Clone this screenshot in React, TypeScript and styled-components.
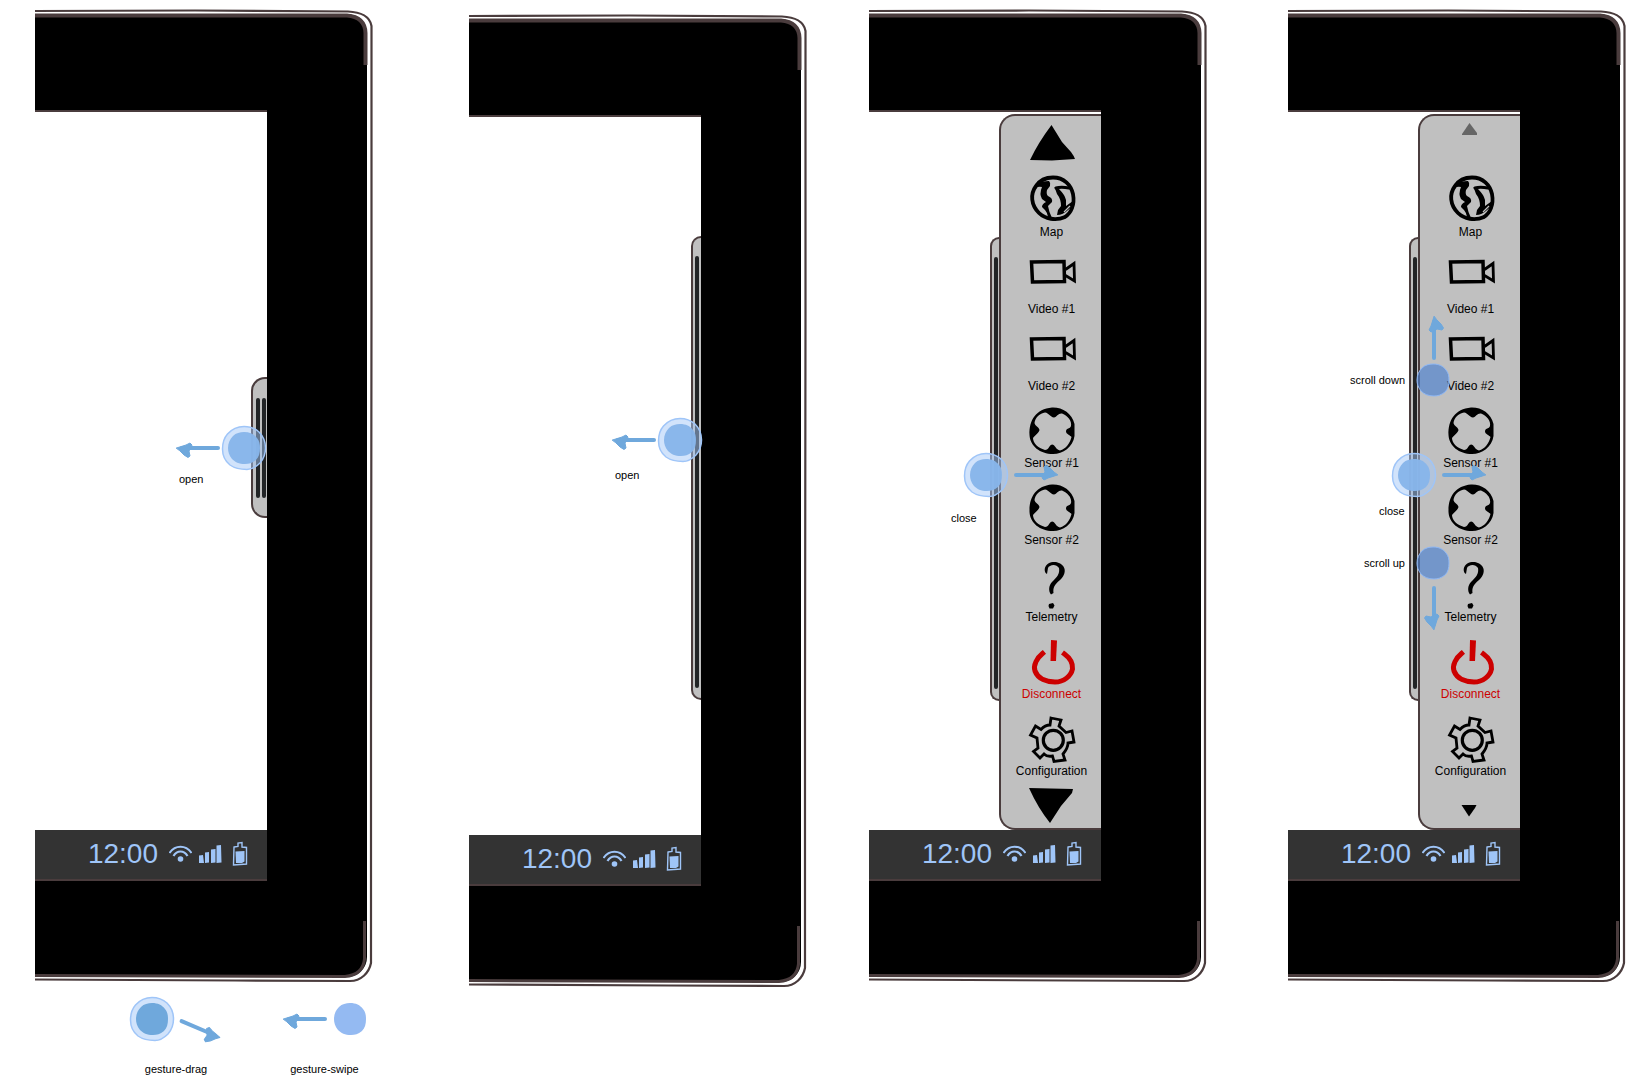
import React from "react";
import styled, { createGlobalStyle } from "styled-components";

const ink = "#4a3c3d";
const panelGrey = "#c0c0c0";
const sky = "#9fc5f8";
const arrowBlue = "#6fa8dc";

const GlobalStyle = createGlobalStyle`
  *, *::before, *::after { box-sizing: border-box; }
  body {
    margin: 0;
    background: #fff;
    color: #000;
    font-family: "Liberation Sans", Arial, sans-serif;
  }
`;

const Page = styled.main`
  padding: 9px 0 0 35px;
`;

const Board = styled.div`
  display: grid;
  grid-template-columns: 434fr 400fr 419fr 338fr;
  align-items: start;
`;

const DeviceFrame = styled.section<{ $drop?: boolean }>`
  position: relative;
  width: 338px;
  margin-top: ${(p) => (p.$drop ? 5 : 0)}px;
  padding: 5px 6px 6px 0;
`;

const Bezel = styled.div`
  padding: 96px 100px 96px 0;
  background: #000;
  border-radius: 0 20px 20px 0;
`;

const Outline = styled.svg`
  position: absolute;
  inset: 0;
  overflow: visible;
  pointer-events: none;
`;

const Screen = styled.div`
  display: flex;
  justify-content: flex-end;
  align-items: flex-start;
  height: 720px;
  background: #fff;
  border-top: 2px solid ${ink};
`;

const StatusBar = styled.footer`
  display: flex;
  justify-content: flex-end;
  align-items: center;
  height: 51px;
  padding: 0 19px 2px 0;
  background: #333;
  border-bottom: 2px solid ${ink};
  color: ${sky};
`;

const Clock = styled.time`
  margin-right: 11px;
  font-size: 28px;
  line-height: 32px;
`;

const StatusIcon = styled.svg<{ $gap?: number }>`
  flex: none;
  margin-left: ${(p) => p.$gap ?? 0}px;
`;

const Handle = styled.button<{ $top: number; $height: number; $width: number }>`
  display: flex;
  flex: none;
  gap: 2px;
  width: ${(p) => p.$width}px;
  height: ${(p) => p.$height}px;
  margin: ${(p) => p.$top}px 0 0;
  padding: ${(p) => (p.$width > 12 ? "19px 0 18px 3px" : "18px 0 10px 2px")};
  background: ${panelGrey};
  border: 2px solid ${ink};
  border-right: 0;
  border-radius: 14px 0 0 14px;
`;

const Grip = styled.span`
  width: 4px;
  height: 100%;
  border-radius: 2px;
  background: #222426;
`;

const Panel = styled.nav`
  display: flex;
  flex-direction: column;
  align-items: center;
  width: 102px;
  height: 716px;
  margin-top: 2px;
  padding: 9px 0 0 1px;
  background: ${panelGrey};
  border: 2px solid ${ink};
  border-right: 0;
  border-radius: 16px 0 0 16px;
`;

const ScrollButton = styled.button`
  display: block;
  width: 48px;
  height: 36px;
  padding: 0;
  background: none;
  border: 0;

  svg {
    display: block;
    overflow: visible;
  }
`;

const Menu = styled.ul`
  display: flex;
  flex-direction: column;
  gap: 11px;
  margin: 14px 0 8px;
  padding: 0;
  list-style: none;
`;

const MenuButton = styled.button<{ $danger?: boolean }>`
  display: flex;
  flex-direction: column;
  align-items: center;
  width: 99px;
  padding: 0;
  background: none;
  border: 0;
  color: ${(p) => (p.$danger ? "#cc0000" : "#000")};
  font-family: inherit;
  font-size: 12px;
  line-height: 18px;

  svg {
    display: block;
    overflow: visible;
  }
`;

/* Gesture annotations float freely above the device drawing. */
const Mark = styled.svg<{ $x: number; $y: number }>`
  position: absolute;
  left: ${(p) => p.$x}px;
  top: ${(p) => p.$y}px;
  overflow: visible;
  pointer-events: none;
`;

const Note = styled.span<{ $x: number; $y: number }>`
  position: absolute;
  left: ${(p) => p.$x}px;
  top: ${(p) => p.$y}px;
  font-size: 11px;
  line-height: 16px;
  white-space: nowrap;
`;

const Legend = styled.div`
  display: flex;
  gap: 61px;
  padding: 9px 0 0 95px;
`;

const LegendItem = styled.figure`
  display: flex;
  flex-direction: column;
  align-items: center;
  gap: 20px;
  margin: 0;

  svg {
    display: block;
    overflow: visible;
  }
`;

const Caption = styled.figcaption`
  font-size: 11px;
  line-height: 16px;
`;

const ringPath =
  "M0 -21.5C6 -21.5 11 -19.5 15 -16C19 -12 21.500 -6 21.500 0C21.500 6 19.500 11 16 15C12 19 8 21.500 3 21.500C-4 21.500 -9 20.500 -14 17C-19 13 -21.500 7 -21.500 1C-21.500 -5 -20 -10 -16.500 -14C-12 -19 -6 -21.500 0 -21.500Z";
const corePath =
  "M0 -16C6 -16 10 -14 13 -10C15.500 -7 16 -4 16 0C16 5 15 9 12 12C8 15 5 16 1 16C-5 16 -9 14 -12 11C-15 7 -16 4 -16 0C-16 -5 -14 -9 -11 -12C-8 -15 -4 -16 0 -16Z";

function Touch({ solid }: { solid?: boolean }) {
  return (
    <g>
      <path d={ringPath} fill="#a4c7f7" fillOpacity={0.5} stroke={sky} strokeWidth={1.5} />
      <path d={corePath} fill={solid ? "#6fa8dc" : "#87b5ea"} fillOpacity={solid ? 1 : 0.96} />
    </g>
  );
}

function Arrow({ angle, flip }: { angle: number; flip?: boolean }) {
  return (
    <g
      transform={`rotate(${angle}) scale(1 ${flip ? -1 : 1})`}
      fill={arrowBlue}
      stroke={arrowBlue}
      strokeLinecap="round"
      strokeLinejoin="round"
    >
      <path d="M-16 0H20" strokeWidth={4} />
      <path d="M-21.500 0L-12 -3L-8 -5L-6 -3L-7 0L-9 3L-8 8L-10 9.500L-14 7L-18 3Z" strokeWidth={1} />
    </g>
  );
}

type Spot = { kind: "drag" | "swipe" | "arrow"; x: number; y: number; angle?: number; flip?: boolean };
type Text = { text: string; x: number; y: number };

function Spots({ spots }: { spots: Spot[] }) {
  return (
    <>
      {spots.map((s, i) => (
        <Mark key={i} $x={s.x} $y={s.y} width={1} height={1} aria-hidden="true">
          {s.kind === "drag" && <Touch />}
          {s.kind === "swipe" && (
            <path d={corePath} fill="#4a80d0" fillOpacity={0.65} stroke="#8fb8f5" strokeWidth={1} />
          )}
          {s.kind === "arrow" && <Arrow angle={s.angle ?? 0} flip={s.flip} />}
        </Mark>
      ))}
    </>
  );
}

function DeviceOutline() {
  return (
    <Outline width={338} height={974} viewBox="0 0 338 974" fill="none" stroke={ink} aria-hidden="true">
      <path
        d="M0 2L160 1.500L313 2.500C326 3 335 8 336.500 17V300L336 700V954C334 964 326 972 315 972L200 971.500L0 970.500"
        strokeWidth={2.2}
      />
      <path d="M0 6.500L312 6.500Q330 8 330.500 24V56" strokeWidth={4} />
      <path d="M0 966.500L310 967.500Q328 966 329.500 950V912" strokeWidth={3} />
    </Outline>
  );
}

function Status() {
  return (
    <StatusBar>
      <Clock>12:00</Clock>
      <StatusIcon width={23} height={18} viewBox="0 0 23 18" fill="none" stroke={sky} aria-label="Wi-Fi">
        <path d="M0.500 8C6 -0.500 17 -0.500 22.500 8" strokeWidth={2} />
        <path d="M4.500 11C8 5 15 5 18.500 11" strokeWidth={2.2} />
        <circle cx={11.500} cy={14} r={2.800} fill={sky} stroke="none" />
      </StatusIcon>
      <StatusIcon $gap={6} width={24} height={20} viewBox="0 0 24 20" fill={sky} aria-label="Signal">
        <path d="M1 11.500L5 11L6 19H1ZM7 8.500L11 8V18.500L7 19ZM13 5.500L17.500 5V18.500L13 19ZM18.500 1.500L23 1L23.500 18.500L18.500 19Z" />
      </StatusIcon>
      <StatusIcon $gap={10} width={16} height={25} viewBox="0 0 16 25" aria-label="Battery">
        <path d="M2 6L6 5.500V2L10 1.500V6L14.500 6.500V23L1.500 24Z" fill="none" stroke={sky} strokeWidth={1.400} />
        <path d="M3.500 10.500L12.500 10V20.500L10 22H4Z" fill={sky} />
      </StatusIcon>
    </StatusBar>
  );
}

const globe = (
  <>
    <path
      d="M25 2.500C36 2.500 43 10 45 19C47 30 43 38 37 42C28 46 17 44 11 38C3 30 2 19 8 11C12 5 18 2.500 25 2.500Z"
      fill="none"
      stroke="currentColor"
      strokeWidth={3.8}
    />
    <path
      d="M7 9C11 7 17 6 21 6Q23 8 22 11L19 15Q18 19 20 21Q25 23 24 27L20 31Q21 37 24 43L20 42Q19 37 17 35L14 32Q14 29 18 27L14 24Q11 19 14 12Q11 11 7 13Z"
      fill="currentColor"
    />
    <path
      d="M28 13Q33 11.500 41 13"
      fill="none"
      stroke="currentColor"
      strokeWidth={3}
      strokeLinecap="round"
    />
    <path
      d="M26.500 12L31 14Q37 20 38 25L38 31L45 26V31L40 35Q35 40 29 40L30 35L33 31Q33 24 29 19Z"
      fill="currentColor"
    />
    <path d="M36 37L42 31" stroke={panelGrey} strokeWidth={1.2} />
  </>
);

const camera = (
  <g fill="none" stroke="currentColor" strokeWidth={3.5} strokeLinejoin="miter">
    <path d="M3.500 10L36 9.500L36.500 29.500L4.500 30Z" />
    <path d="M37.500 17.500L46 11.500L46.500 29L37.500 23.500" strokeWidth={2.800} />
  </g>
);

const sensor = (
  <path
    fill="currentColor"
    fillRule="evenodd"
    d="M24 1.500C34 1 44 7 46.500 18V30C45 41 35 48 25 48C12 48 2 40 1.500 29C1 14 8 3 24 1.500Z
       M17 6.500C21 7 22 11 26 11.500C29 11 30 7 34 7.500C40 10 44 15 43 20C42 23 38 22 38 25.500C38 28 42 29 43.500 31C42 37 38 43 32 44.500C28 44 27 38.500 24 38.500C21 39 21 44 17 44C10 42 5 37 5 32C7 29 11 27 11.500 24C11 21 7 20 6.500 17C7 12 12 7 17 6.500Z"
  />
);

const question = (
  <>
    <path
      d="M16.700 9C18 1 28 1 31 3C40 7 37 16 32 20C26 25 25 28 25.500 33L23 34.500C20 31 21 25 24 22C29 17 32 14 31 8C28 3 21 5 20 8L19 14Q16.500 13 16.700 9Z"
      fill="currentColor"
    />
    <path d="M21 44L25 43L26.500 45.500L25 48.500H21.500L20.500 46Z" fill="currentColor" />
  </>
);

const power = (
  <>
    <path d="M23 3L29 3.500L28 24H22.500Z" fill="currentColor" />
    <path
      d="M14.500 16.500C9 21 5 28 7 34C10 42 19 45 27 45C36 45 43 39 44.500 32C45 26 42 21 36.500 17"
      fill="none"
      stroke="currentColor"
      strokeWidth={5}
      strokeLinecap="square"
      strokeLinejoin="round"
    />
  </>
);

const gear = (
  <g fill="none" stroke="currentColor">
    <path
      d="M23 4L33 6L31 12L38 18.500L44 17L46 28L40 29Q40 34 35 40L37 46L26 47.500L24.500 42Q19 43 16 40L12 44L5.500 37.500L10 34L9 24L2.500 21L7.500 12L13 15.500Q17 11 22 11Z"
      strokeWidth={2.800}
    />
    <circle cx={25.300} cy={26.300} r={10} strokeWidth={3.200} />
  </g>
);

const menuItems = [
  { label: "Map", icon: globe },
  { label: "Video #1", icon: camera },
  { label: "Video #2", icon: camera },
  { label: "Sensor #1", icon: sensor },
  { label: "Sensor #2", icon: sensor },
  { label: "Telemetry", icon: question },
  { label: "Disconnect", icon: power, danger: true },
  { label: "Configuration", icon: gear },
];

function MenuPanel({ compact }: { compact?: boolean }) {
  return (
    <Panel aria-label="Views">
      <ScrollButton type="button" aria-label="Previous items">
        <svg width={48} height={36} viewBox="0 0 48 36">
          {compact ? (
            <path d="M22.500 -2L30 8V10H15V9Z" fill="#666" />
          ) : (
            <path d="M23.500 0L34 17L43 27Q46 31 47 34L24 35.500L2 35Q10 18 23.500 0Z" />
          )}
        </svg>
      </ScrollButton>
      <Menu>
        {menuItems.map((item) => (
          <li key={item.label}>
            <MenuButton type="button" $danger={item.danger}>
              <svg width={48} height={48} viewBox="0 0 48 48" aria-hidden="true">
                {item.icon}
              </svg>
              {item.label}
            </MenuButton>
          </li>
        ))}
      </Menu>
      <ScrollButton type="button" aria-label="More items">
        <svg width={48} height={36} viewBox="0 0 48 36">
          {compact ? (
            <path d="M14.500 17H29.500L28 20L22 28.500Z" />
          ) : (
            <path d="M1 0L45 1L44 5L33 18L22 35Q10 20 1 0Z" />
          )}
        </svg>
      </ScrollButton>
    </Panel>
  );
}

type DeviceProps = {
  drop?: boolean;
  handle: { top: number; height: number; width: number; grips: number };
  panel?: "large" | "compact";
  spots: Spot[];
  notes: Text[];
};

function Device({ drop, handle, panel, spots, notes }: DeviceProps) {
  return (
    <DeviceFrame $drop={drop}>
      <Bezel>
        <Screen>
          <Handle
            type="button"
            aria-label={panel ? "Close menu" : "Open menu"}
            $top={handle.top}
            $height={handle.height}
            $width={handle.width}
          >
            {Array.from({ length: handle.grips }, (_, i) => (
              <Grip key={i} />
            ))}
          </Handle>
          {panel && <MenuPanel compact={panel === "compact"} />}
        </Screen>
        <Status />
      </Bezel>
      <DeviceOutline />
      <Spots spots={spots} />
      {notes.map((n) => (
        <Note key={n.text} $x={n.x} $y={n.y}>
          {n.text}
        </Note>
      ))}
    </DeviceFrame>
  );
}

const devices: DeviceProps[] = [
  {
    handle: { top: 265, height: 141, width: 16, grips: 2 },
    spots: [
      { kind: "drag", x: 209, y: 439 },
      { kind: "arrow", x: 163, y: 439 },
    ],
    notes: [{ text: "open", x: 144, y: 462 }],
  },
  {
    drop: true,
    handle: { top: 119, height: 464, width: 10, grips: 1 },
    spots: [
      { kind: "drag", x: 211, y: 426 },
      { kind: "arrow", x: 165, y: 426 },
    ],
    notes: [{ text: "open", x: 146, y: 453 }],
  },
  {
    handle: { top: 125, height: 464, width: 9, grips: 1 },
    panel: "large",
    spots: [
      { kind: "drag", x: 117, y: 466 },
      { kind: "arrow", x: 167, y: 466, angle: 180 },
    ],
    notes: [{ text: "close", x: 82, y: 501 }],
  },
  {
    handle: { top: 125, height: 464, width: 9, grips: 1 },
    panel: "compact",
    spots: [
      { kind: "swipe", x: 145, y: 371 },
      { kind: "arrow", x: 146, y: 329, angle: 90, flip: true },
      { kind: "drag", x: 126, y: 466 },
      { kind: "arrow", x: 176, y: 466, angle: 180 },
      { kind: "swipe", x: 145, y: 554 },
      { kind: "arrow", x: 146, y: 599, angle: -90, flip: true },
    ],
    notes: [
      { text: "scroll down", x: 62, y: 363 },
      { text: "close", x: 91, y: 494 },
      { text: "scroll up", x: 76, y: 546 },
    ],
  },
];

export default function App() {
  return (
    <>
      <GlobalStyle />
      <Page>
        <Board>
          {devices.map((d, i) => (
            <Device key={i} {...d} />
          ))}
        </Board>
        <Legend>
          <LegendItem>
            <svg width={92} height={44} viewBox="0 0 92 44" aria-hidden="true">
              <g transform="translate(22 22)">
                <Touch solid />
              </g>
              <g transform="translate(70 32)">
                <Arrow angle={203} flip />
              </g>
            </svg>
            <Caption>gesture-drag</Caption>
          </LegendItem>
          <LegendItem>
            <svg width={83} height={44} viewBox="0 0 83 44" aria-hidden="true">
              <g transform="translate(22 22)">
                <Arrow angle={0} />
              </g>
              <path d={corePath} transform="translate(67 22)" fill="#94baf2" />
            </svg>
            <Caption>gesture-swipe</Caption>
          </LegendItem>
        </Legend>
      </Page>
    </>
  );
}
